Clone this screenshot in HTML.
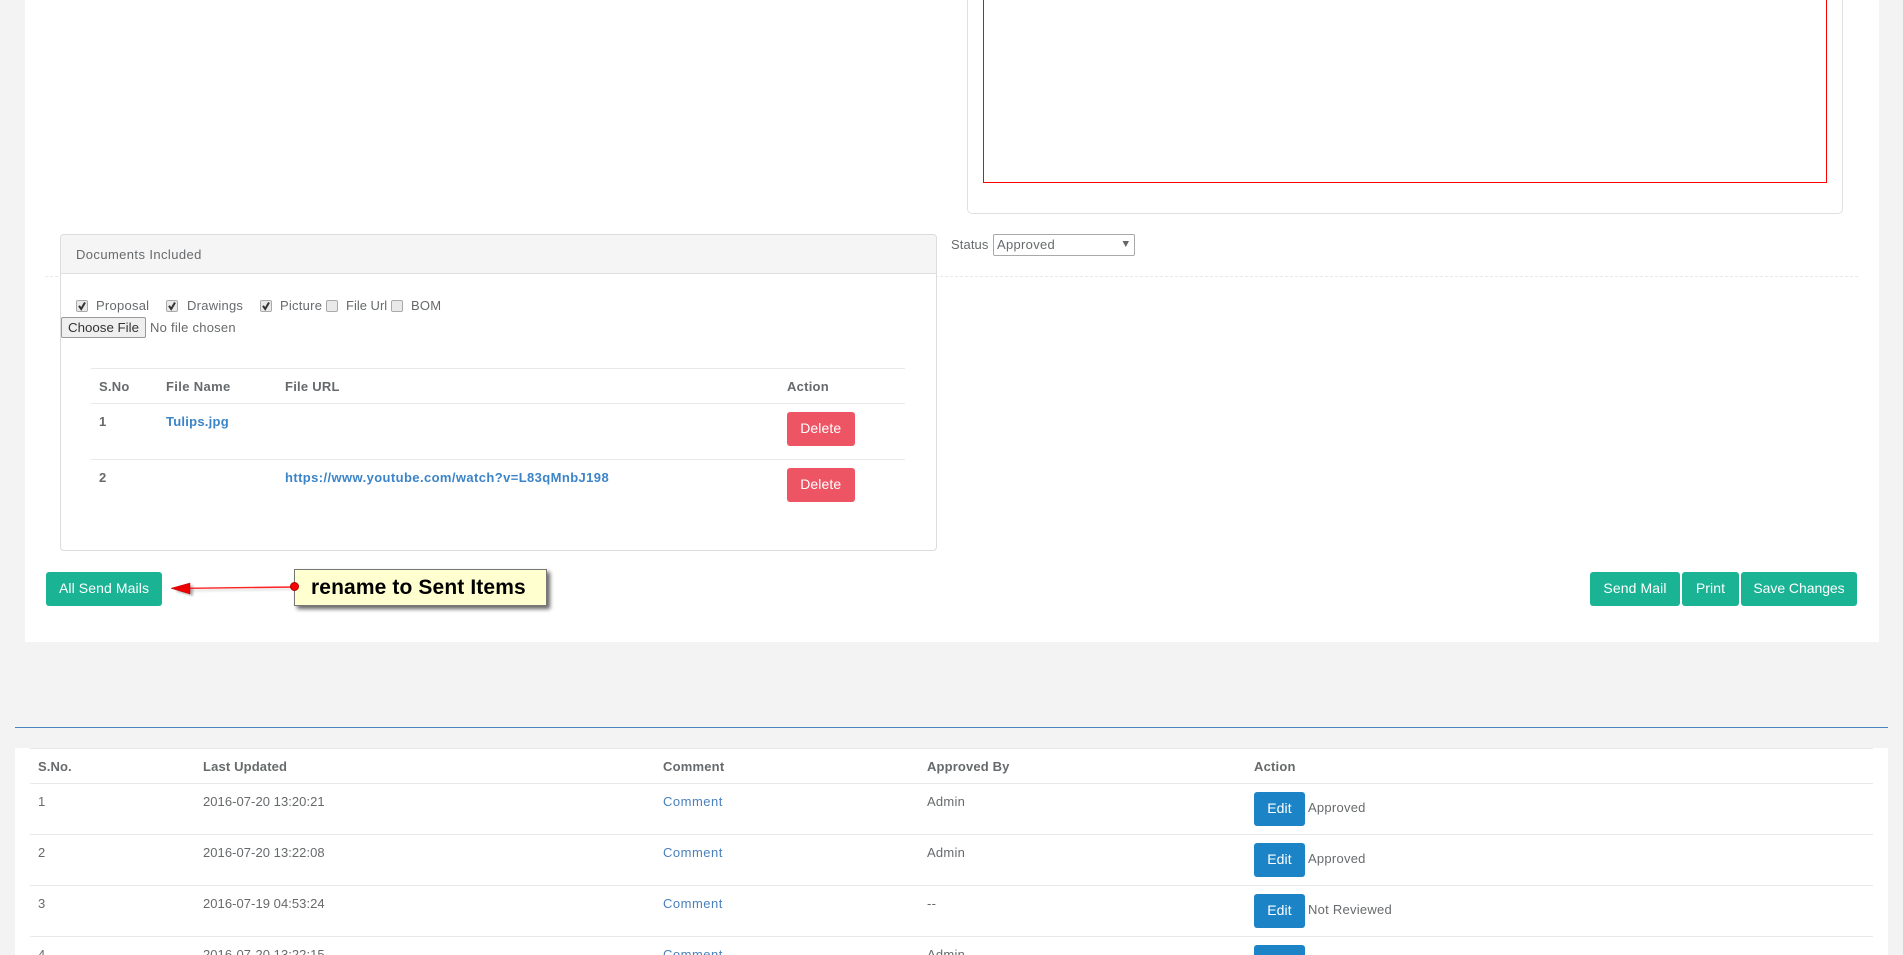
<!DOCTYPE html>
<html lang="en">
<head>
<meta charset="utf-8">
<title>Documents</title>
<style>
html,body{margin:0;padding:0;width:1903px;height:955px;overflow:hidden;background:#f3f3f4}
body{position:relative;font-family:"Liberation Sans",Arial,sans-serif;font-size:13px;color:#676a6c}
.a{position:absolute;white-space:nowrap}
.t{position:absolute;white-space:nowrap;line-height:18px;letter-spacing:.25px}
.b{font-weight:bold}
.hl{position:absolute;height:1px;background:#e7eaec}
.btn{position:absolute;height:34px;line-height:33px;text-align:center;color:#fff;border-radius:3px;font-size:14px;letter-spacing:.1px;box-sizing:border-box;white-space:nowrap}
.g{background:#1ab394}
.r{background:#ed5565}
.e{background:#1c84c6;width:51px}
.cb{position:absolute;width:10px;height:10px;border:1px solid #aaa;border-radius:2px;background:#e9e9e9;top:300px}
.cb svg{position:absolute;left:0;top:0}
a{color:#4a80bd;text-decoration:none}
.b a{color:#3b84c8}
.c a{letter-spacing:.5px}
</style>
</head>
<body>
<!-- main white panel -->
<div class="a" style="left:25px;top:0;width:1854px;height:642px;background:#fff"></div>

<!-- outer editor panel + red box -->
<div class="a" style="left:967px;top:-10px;width:874px;height:222px;border:1px solid #e0e0e0;border-radius:5px;background:#fff"></div>
<div class="a" style="left:983px;top:-10px;width:842px;height:191px;border:1px solid #f00"></div>

<!-- dashed separator -->
<div class="a" style="left:45px;top:276px;width:1813px;height:0;border-top:1px dashed #e7eaec"></div>

<!-- status -->
<div class="t" style="left:951px;top:236px;letter-spacing:.1px">Status</div>
<div class="a" style="left:993px;top:234px;width:140px;height:20px;border:1px solid #a9a9a9;border-radius:2px;background:#fff"></div>
<div class="t" style="left:997px;top:236px;letter-spacing:.3px">Approved</div>
<svg class="a" style="left:1122px;top:240px" width="8" height="8"><path d="M0.5 1H7L3.8 7Z" fill="#666"/></svg>

<!-- documents panel -->
<div class="a" style="left:60px;top:234px;width:875px;height:315px;border:1px solid #dcdcdc;border-radius:4px;background:#fff"></div>
<div class="a" style="left:61px;top:235px;width:875px;height:38px;background:#f5f5f5;border-bottom:1px solid #e0e0e0;border-radius:4px 4px 0 0"></div>
<div class="t" style="left:76px;top:246px;letter-spacing:.4px">Documents Included</div>

<div class="cb" style="left:76px"><svg width="10" height="10"><path d="M2 4.8L4.2 8L8 1.5" fill="none" stroke="#333" stroke-width="2"/></svg></div>
<div class="t" style="left:96px;top:297px">Proposal</div>
<div class="cb" style="left:166px"><svg width="10" height="10"><path d="M2 4.8L4.2 8L8 1.5" fill="none" stroke="#333" stroke-width="2"/></svg></div>
<div class="t" style="left:187px;top:297px">Drawings</div>
<div class="cb" style="left:260px"><svg width="10" height="10"><path d="M2 4.8L4.2 8L8 1.5" fill="none" stroke="#333" stroke-width="2"/></svg></div>
<div class="t" style="left:280px;top:297px">Picture</div>
<div class="cb" style="left:326px"></div>
<div class="t" style="left:346px;top:297px;letter-spacing:0">File Url</div>
<div class="cb" style="left:391px"></div>
<div class="t" style="left:411px;top:297px">BOM</div>

<div class="a" style="left:61px;top:317px;width:83px;height:19px;border:1px solid #999;border-radius:2px;background:#efefef;color:#333;font-size:13.3px;line-height:19px;text-align:center">Choose File</div>
<div class="t" style="left:150px;top:319px">No file chosen</div>

<!-- inner table -->
<div class="hl" style="left:91px;top:368px;width:814px"></div>
<div class="hl" style="left:91px;top:403px;width:814px"></div>
<div class="hl" style="left:91px;top:459px;width:814px"></div>
<div class="t b" style="left:99px;top:378px">S.No</div>
<div class="t b" style="left:166px;top:378px;letter-spacing:.35px">File Name</div>
<div class="t b" style="left:285px;top:378px">File URL</div>
<div class="t b" style="left:787px;top:378px">Action</div>
<div class="t b" style="left:99px;top:413px">1</div>
<div class="t b" style="left:166px;top:413px"><a href="#">Tulips.jpg</a></div>
<div class="btn r" style="left:786.5px;top:412px;width:68.5px">Delete</div>
<div class="t b" style="left:99px;top:469px">2</div>
<div class="t b" style="left:285px;top:469px;letter-spacing:.4px"><a href="#">https://www.youtube.com/watch?v=L83qMnbJ198</a></div>
<div class="btn r" style="left:786.5px;top:468px;width:68.5px">Delete</div>

<!-- buttons -->
<div class="btn g" style="left:46px;top:572px;width:116px">All Send Mails</div>
<div class="btn g" style="left:1590px;top:572px;width:90px">Send Mail</div>
<div class="btn g" style="left:1682px;top:572px;width:57px">Print</div>
<div class="btn g" style="left:1741px;top:572px;width:116px;letter-spacing:-.05px">Save Changes</div>

<!-- annotation -->
<svg class="a" style="left:160px;top:570px" width="145" height="36">
  <path d="M134 19L30 20.5" stroke="#888" stroke-width="2" fill="none" opacity=".25" style="filter:blur(1px)"/>
  <path d="M15 21L33 15V26Z" fill="#555" opacity=".45" style="filter:blur(1px)"/>
  <path d="M134 17L28 18.3" stroke="#f22" stroke-width="1.4" fill="none"/>
  <path d="M11 18.3L30 13V24Z" fill="#e00" stroke="#b00" stroke-width=".5"/>
</svg>
<div class="a" style="left:294px;top:569px;width:251px;height:35px;background:#ffffd0;border:1px solid #777;box-shadow:3px 3px 4px rgba(0,0,0,.6)"></div>
<div class="a" style="left:290px;top:582px;width:9px;height:9px;border-radius:50%;background:#f00;border:.5px solid #a00;box-sizing:border-box"></div>
<div class="a" style="left:311px;top:576px;font-weight:bold;font-size:21px;line-height:24px;color:#000;letter-spacing:.12px">rename to Sent Items</div>

<!-- rule -->
<div class="a" style="left:15px;top:727px;width:1873px;height:1px;background:#4a83bf"></div>

<!-- bottom table -->
<div class="a" style="left:15px;top:748px;width:1873px;height:207px;background:#fff"></div>
<div class="hl" style="left:30px;top:748px;width:1843px"></div>
<div class="hl" style="left:30px;top:783px;width:1843px"></div>
<div class="hl" style="left:30px;top:834px;width:1843px"></div>
<div class="hl" style="left:30px;top:885px;width:1843px"></div>
<div class="hl" style="left:30px;top:936px;width:1843px"></div>

<div class="t b" style="left:38px;top:758px;letter-spacing:.1px">S.No.</div>
<div class="t b" style="left:203px;top:758px;letter-spacing:.15px">Last Updated</div>
<div class="t b" style="left:663px;top:758px;letter-spacing:.2px">Comment</div>
<div class="t b" style="left:927px;top:758px;letter-spacing:.15px">Approved By</div>
<div class="t b" style="left:1254px;top:758px;letter-spacing:.2px">Action</div>

<div class="t" style="left:38px;top:793px">1</div>
<div class="t" style="left:203px;top:793px;letter-spacing:.05px">2016-07-20 13:20:21</div>
<div class="t c" style="left:663px;top:793px"><a href="#">Comment</a></div>
<div class="t" style="left:927px;top:793px">Admin</div>
<div class="btn e" style="left:1254px;top:792px">Edit</div>
<div class="t" style="left:1308px;top:799px">Approved</div>

<div class="t" style="left:38px;top:844px">2</div>
<div class="t" style="left:203px;top:844px;letter-spacing:.05px">2016-07-20 13:22:08</div>
<div class="t c" style="left:663px;top:844px"><a href="#">Comment</a></div>
<div class="t" style="left:927px;top:844px">Admin</div>
<div class="btn e" style="left:1254px;top:843px">Edit</div>
<div class="t" style="left:1308px;top:850px">Approved</div>

<div class="t" style="left:38px;top:895px">3</div>
<div class="t" style="left:203px;top:895px;letter-spacing:.05px">2016-07-19 04:53:24</div>
<div class="t c" style="left:663px;top:895px"><a href="#">Comment</a></div>
<div class="t" style="left:927px;top:895px">--</div>
<div class="btn e" style="left:1254px;top:894px">Edit</div>
<div class="t" style="left:1308px;top:901px">Not Reviewed</div>

<div class="t" style="left:38px;top:946px">4</div>
<div class="t" style="left:203px;top:946px;letter-spacing:.05px">2016-07-20 13:22:15</div>
<div class="t c" style="left:663px;top:946px"><a href="#">Comment</a></div>
<div class="t" style="left:927px;top:946px">Admin</div>
<div class="btn e" style="left:1254px;top:945px"></div>
</body>
</html>
